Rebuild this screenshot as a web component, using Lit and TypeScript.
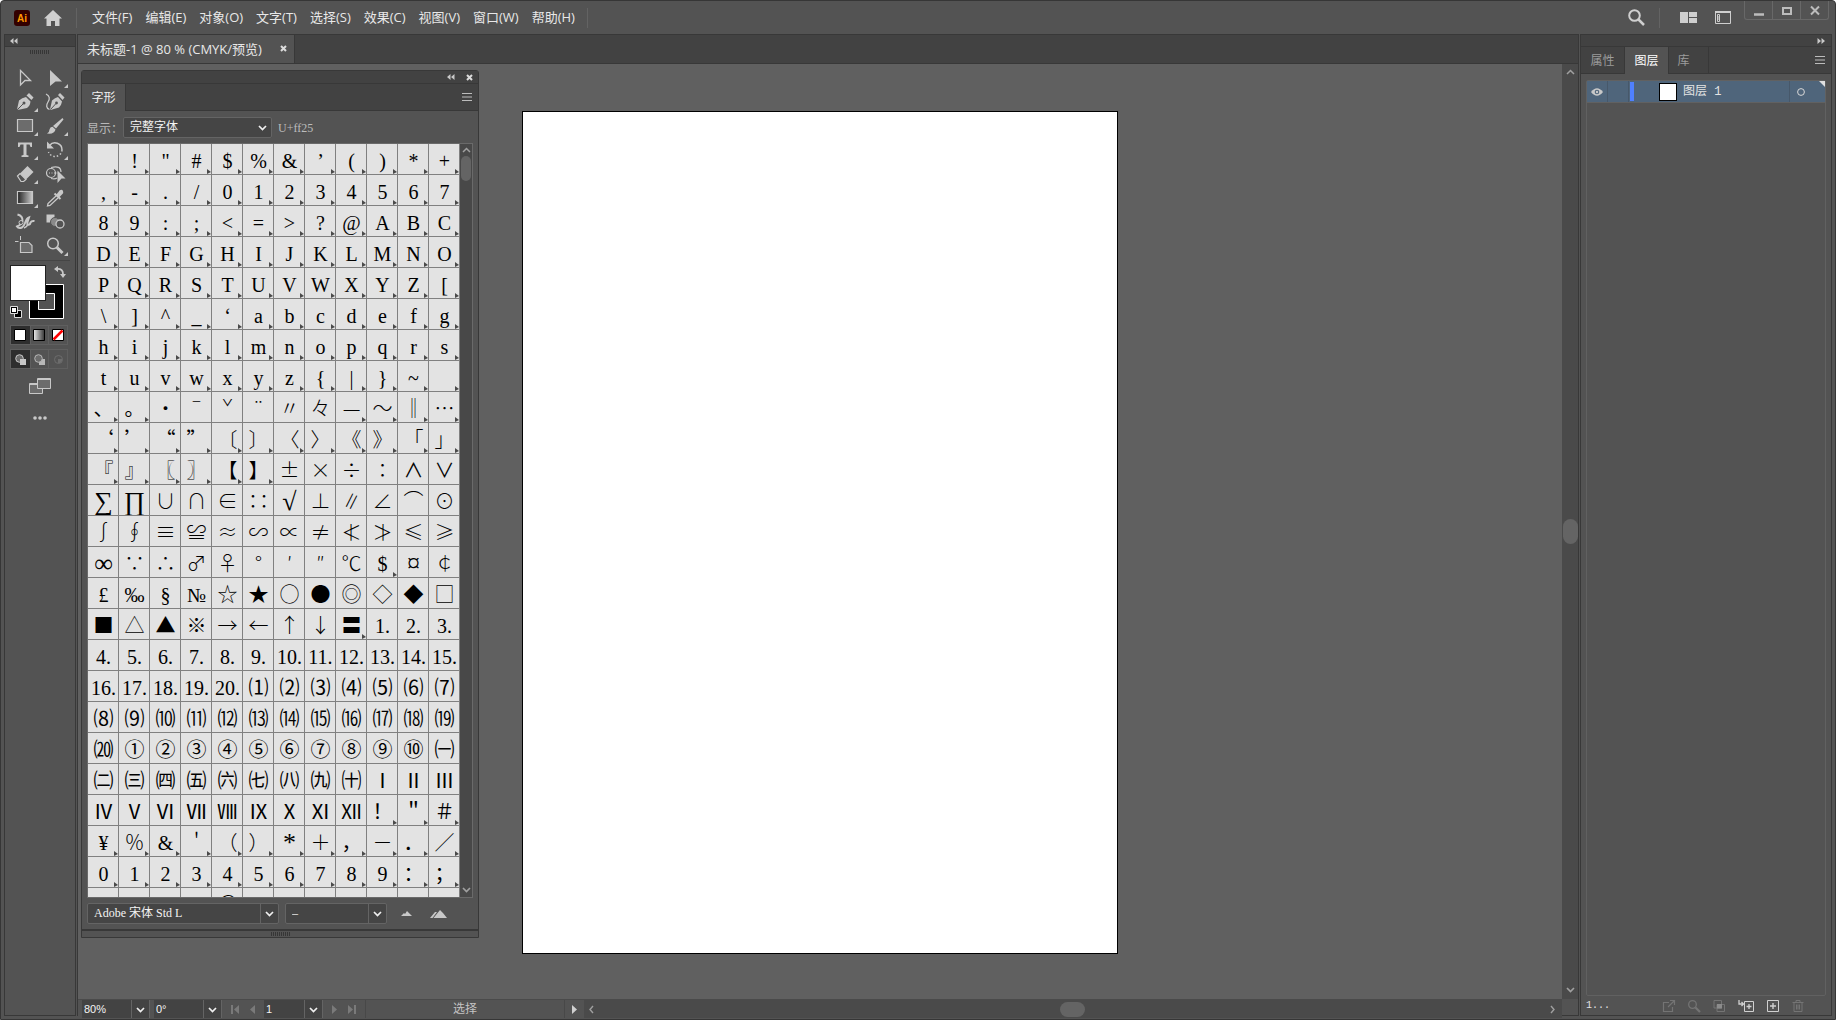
import { LitElement, html, css, svg, nothing } from "lit";
import { customElement, property } from "lit/decorators.js";
import { classMap } from "lit/directives/class-map.js";

const base = css`
  * {
    box-sizing: border-box;
  }
  button {
    appearance: none;
    border: 0;
    margin: 0;
    padding: 0;
    background: none;
    color: inherit;
    font: inherit;
    display: flex;
    align-items: center;
    justify-content: center;
  }
  svg {
    display: block;
    flex: none;
    overflow: visible;
  }
`;

const icon = (w: number, h: number, body: unknown) => html`<svg
  width=${w}
  height=${h}
  viewBox="0 0 ${w} ${h}"
  aria-hidden="true"
>
  ${body}
</svg>`;

const chevronDown = (color = "#f0f0f0") =>
  icon(9, 6, svg`<path d="M1 1l3.500 3.500L8 1" fill="none" stroke=${color} stroke-width="1.700"/>`);
const chevronUp = (color = "#a0a0a0") =>
  icon(9, 6, svg`<path d="M1 5l3.500-3.500L8 5" fill="none" stroke=${color} stroke-width="1.500"/>`);
const chevronLeft = icon(5, 9, svg`<path d="M4 1L1 4.500L4 8" fill="none" stroke="#a0a0a0" stroke-width="1.400"/>`);
const chevronRight = icon(5, 9, svg`<path d="M1 1l3 3.500L1 8" fill="none" stroke="#a0a0a0" stroke-width="1.400"/>`);
const doubleLeft = icon(8, 6, svg`<path d="M3.500 0v6L0 3zM7.500 0v6L4 3z" fill="#c8c8c8"/>`);
const doubleRight = icon(8, 6, svg`<path d="M.5 0v6L4 3zM4.500 0v6L8 3z" fill="#c8c8c8"/>`);
const closeMark = icon(7, 7, svg`<path d="M1 1l5 5M6 1L1 6" stroke="#dcdcdc" stroke-width="2"/>`);
const hamburger = icon(10, 8, svg`<path d="M0 .5h10M0 4h10M0 7.500h10" stroke="#bcbcbc"/>`);
const grip = icon(
  19,
  4,
  svg`<path d="M.5 0v4M2.500 0v4M4.500 0v4M6.500 0v4M8.500 0v4M10.500 0v4M12.500 0v4M14.500 0v4M16.500 0v4M18.500 0v4" stroke="#363636"/>`
);
const C = "#c8c8c8";

interface Tool {
  name: string;
  more: boolean;
  art: unknown;
}

const tools: Tool[] = [
  { name: "直接选择", more: false, art: svg`<path d="M5.500 2.500L15.500 12.500H10L5.500 17z" fill="none" stroke=${C} stroke-width="1.300"/>` },
  { name: "选择", more: true, art: svg`<path d="M5 2L17 13.500H10.500L5 18z" fill=${C}/>` },
  {
    name: "钢笔",
    more: true,
    art: svg`<path d="M2 17.500L4 8.500Q7 5.500 11 5L15.500 9.500Q15 14 12 16L2.500 18L8 12z" fill=${C}/><path d="M2.500 17.500L8.500 11.500" stroke="#535353"/><circle cx="9" cy="11" r="1.500" fill="#535353"/><path d="M11.500 3.500L14 1L18.500 5.500L16.500 8z" fill=${C}/>`,
  },
  {
    name: "曲率",
    more: false,
    art: svg`<path d="M5 17.500L7 8.500Q10 5.500 13 5L17 9.500Q16.500 13 14 15.500L5.500 18z" fill=${C}/><path d="M5.500 17.500L11 11.500" stroke="#535353"/><circle cx="11.500" cy="11" r="1.400" fill="#535353"/><path d="M13 3L15 1L19.500 5.500L17.500 8z" fill=${C}/><path d="M1 2C5 4 5 7 3 10S1 16 4.500 17.500" fill="none" stroke=${C} stroke-width="1.300"/>`,
  },
  { name: "矩形", more: true, art: svg`<path d="M2.500 3.500h15v12h-15z" fill="#6c6c6c" stroke=${C} stroke-width="1.200"/>` },
  {
    name: "画笔",
    more: true,
    art: svg`<path d="M17.500 2L18.500 3.500L11 12.500L8 10z" fill=${C}/><path d="M7.500 10.800L10.500 13.500Q9.500 18.500 2 17.500Q4.500 16 4.500 13.500Q5 11 7.500 10.800z" fill=${C}/>`,
  },
  { name: "文字", more: true, art: svg`<path d="M3 2.500H17V7H15.500L14.500 4.500H11.500V15L13.500 15.500V17H6.500V15.500L8.500 15V4.500H5.500L4.500 7H3z" fill=${C}/>` },
  {
    name: "旋转",
    more: true,
    art: svg`<path d="M4.500 5.500A7 7 0 0 1 17 10" fill="none" stroke=${C} stroke-width="1.500"/><path d="M2 1.500V8.500H9z" fill=${C}/><path d="M17 10A7 7 0 0 1 3.500 12" fill="none" stroke=${C} stroke-width="1.500" stroke-dasharray="1.500 2"/>`,
  },
  {
    name: "橡皮擦",
    more: true,
    art: svg`<path d="M2.500 12L12.500 2L18.500 8L9 17.500z" fill=${C}/><path d="M2.500 12L5 9.500L11 15.500L8.500 17.500H6z" fill="#535353" stroke=${C} stroke-width="1.200"/>`,
  },
  {
    name: "形状生成器",
    more: false,
    art: svg`<circle cx="6" cy="9" r="4.500" fill="none" stroke=${C} stroke-width="1.200"/><path d="M6 3.500Q16 1 16 8M6 14.500Q10 15.500 12 14" fill="none" stroke=${C} stroke-width="1.200"/><path d="M4 9h9" stroke=${C} stroke-dasharray="1 1.500"/><path d="M12.500 6.500L20.500 14.500H16.500L12.500 19z" fill=${C}/>`,
  },
  {
    name: "渐变",
    more: true,
    art: svg`<defs><linearGradient id="toolGrad"><stop offset="0" stop-color="#222"/><stop offset="1" stop-color="#ccc"/></linearGradient></defs><path d="M2.500 3.500h15v12h-15z" fill="url(#toolGrad)" stroke=${C} stroke-width="1.200"/>`,
  },
  {
    name: "吸管",
    more: false,
    art: svg`<path d="M11.500 6.500L14.500 2.500Q17 1 18 3Q19 5 17 6.500L14 9.500z" fill=${C}/><path d="M9.500 5.500L15.500 11" stroke=${C} stroke-width="2"/><path d="M11 8L3 15.500L2.500 18L5 17.500L13 10" fill="none" stroke=${C} stroke-width="1.300"/>`,
  },
  {
    name: "操控变形",
    more: false,
    art: svg`<path d="M2.500 2.500Q8 4 7.500 9Q6.500 12.500 2 14.500Q3.500 17 7 15.500Q9 14 10 11Q11.500 6.500 14 5.500L13 8.500Q12 11 12.500 12.500Q15 13.500 15.500 10.500Q16.500 8.500 19.500 9" fill="none" stroke=${C} stroke-width="2"/><path d="M9 16Q12 15 13 12" fill="none" stroke=${C} stroke-width="1.500"/><circle cx="6" cy="10.500" r="2" fill="#535353" stroke=${C}/>`,
  },
  {
    name: "混合",
    more: false,
    art: svg`<path d="M1.500 2.500h8v8h-8z" fill=${C}/><circle cx="10" cy="10" r="4.500" fill="#8a8a8a" stroke="#535353" /><circle cx="15" cy="12" r="4" fill="#535353" stroke=${C} stroke-width="1.300"/>`,
  },
  {
    name: "画板",
    more: false,
    art: svg`<path d="M5.500 6.500h8.500l3 3v7H5.500z" fill="#6c6c6c" stroke=${C} stroke-width="1.200"/><path d="M5.500 0v4M0 5.500h3.500" stroke=${C}/>`,
  },
  {
    name: "缩放",
    more: true,
    art: svg`<circle cx="8" cy="7.500" r="5.300" fill="none" stroke=${C} stroke-width="1.500"/><path d="M12 11.500l5.500 5.500" stroke=${C} stroke-width="3"/>`,
  },
];

@customElement("tool-strip")
export class ToolStrip extends LitElement {
  static styles = [
    base,
    css`
      :host {
        display: flex;
        flex-direction: column;
        border: 1px solid #383838;
        background: #535353;
      }
      .head {
        height: 12px;
        padding-left: 5px;
        background: #424242;
        border-bottom: 1px solid #383838;
        display: flex;
        align-items: center;
      }
      .grip {
        height: 19px;
        padding: 3px 0 0 25px;
      }
      .tools {
        display: grid;
        grid-template-columns: 30px 30px;
        grid-auto-rows: 24px;
        padding-left: 5px;
      }
      .rule {
        height: 1px;
        margin: 2px 5px 4px;
        background: #454545;
      }
      .colors {
        position: relative;
        height: 60px;
      }
      .fill,
      .stroke,
      .swap,
      .default {
        position: absolute;
      }
      .fill {
        left: 5px;
        top: 0;
        width: 36px;
        height: 36px;
        background: #fff;
        border: 1px solid #222;
      }
      .stroke {
        left: 24px;
        top: 19px;
      }
      .swap {
        left: 49px;
        top: 1px;
      }
      .default {
        left: 5px;
        top: 41px;
      }
      .trio {
        display: grid;
        grid-template-columns: repeat(3, 1fr);
        width: 58px;
        height: 20px;
        margin: 0 0 4px 5px;
        border: 1px solid #5f5f5f;
      }
      .trio button + button {
        border-left: 1px solid #5f5f5f;
      }
      .trio .on {
        background: #2e2e2e;
      }
      .screen,
      .dots {
        align-self: flex-start;
      }
      .screen {
        margin: 5px 0 0 24px;
      }
      .dots {
        margin: 22px 0 0 28px;
      }
    `,
  ];

  render() {
    return html`
      <div class="head"><button aria-label="折叠">${doubleLeft}</button></div>
      <div class="grip">${grip}</div>
      <div class="tools">
        ${tools.map(
          (t) => html`<button aria-label=${t.name}>
            ${icon(20, 20, svg`${t.art}${t.more ? svg`<path d="M23 16v4h-4z" fill=${C}/>` : nothing}`)}
          </button>`
        )}
      </div>
      <div class="rule"></div>
      <div class="colors">
        <button class="stroke" aria-label="描边">
          ${icon(
            35,
            35,
            svg`<path d="M.5 .5h34v34H.5z" fill="#000" stroke="#fff"/><path d="M9.500 9.500h16v16h-16z" fill="#535353" stroke="#fff"/>`
          )}
        </button>
        <button class="fill" aria-label="填色"></button>
        <button class="swap" aria-label="互换填色和描边">
          ${icon(12, 12, svg`<path d="M3 3Q9 2.500 9 8" fill="none" stroke=${C} stroke-width="1.800"/><path d="M4 0v6L0 3zM6 8h6l-3 4z" fill=${C}/>`)}
        </button>
        <button class="default" aria-label="默认填色和描边">
          ${icon(
            12,
            12,
            svg`<path d="M4.500 4.500h7v7h-7z" fill="#000" stroke="#ddd"/><path d="M.5 .5h7v7h-7z" fill="#000" stroke="#ddd"/><path d="M2 2h4v4H2z" fill="#fff"/>`
          )}
        </button>
      </div>
      <div class="trio">
        <button class="on" aria-label="颜色">${icon(12, 12, svg`<path d="M.5 .5h11v11H.5z" fill="#fff" stroke="#000"/>`)}</button>
        <button aria-label="渐变填充">
          ${icon(
            12,
            12,
            svg`<defs><linearGradient id="g"><stop offset="0" stop-color="#eee"/><stop offset="1" stop-color="#333"/></linearGradient></defs><path d="M.5 .5h11v11H.5z" fill="url(#g)" stroke="#000"/>`
          )}
        </button>
        <button aria-label="无">
          ${icon(12, 12, svg`<path d="M.5 .5h11v11H.5z" fill="#fff" stroke="#000"/><path d="M1.500 10.500l9-9" stroke="#f00" stroke-width="2.500"/>`)}
        </button>
      </div>
      <div class="trio">
        <button class="on" aria-label="正常绘图">${this.mode("#c8c8c8", 0)}</button>
        <button aria-label="背面绘图">${this.mode("#b8b8b8", 1)}</button>
        <button aria-label="内部绘图">${this.mode("#6c6c6c", 2)}</button>
      </div>
      <button class="screen" aria-label="更改屏幕模式">
        ${icon(22, 16, svg`<path d="M.5 5.500h13v10H.5z" fill="#6c6c6c" stroke=${C}/><path d="M8.500 .5h13v10h-13z" fill="#6c6c6c" stroke=${C}/><path d="M8 1.500h14M1 6.500h7" stroke=${C}/>`)}
      </button>
      <button class="dots" aria-label="编辑工具栏">
        ${icon(14, 4, svg`<circle cx="2" cy="2" r="1.800" fill=${C}/><circle cx="7" cy="2" r="1.800" fill=${C}/><circle cx="12" cy="2" r="1.800" fill=${C}/>`)}
      </button>
    `;
  }

  private mode(color: string, kind: number) {
    const circle = svg`<circle cx="4.500" cy="4.500" r="3.800" fill="#6c6c6c" stroke=${color}/>`;
    const square = svg`<path d="M5 5h6v6H5z" fill=${color}/>`;
    return icon(
      11,
      11,
      kind === 0
        ? svg`${circle}${square}`
        : kind === 1
          ? svg`${square}${circle}`
          : svg`<circle cx="5.500" cy="5.500" r="4" fill="none" stroke=${color}/><path d="M5 5h4v2L7 9H5z" fill=${color}/>`
    );
  }
}

interface Row {
  glyphs: string[];
  face: "latin" | "cjk";
  alternates: (col: number) => boolean;
}

const all = () => true;
const none = () => false;
const row = (text: string | string[], face: Row["face"], alternates: Row["alternates"] = none): Row => ({
  glyphs: Array.isArray(text) ? text : [...text],
  face,
  alternates,
});

const rows: Row[] = [
  row(" !\"#$%&’()*+", "latin", all),
  row(",-./01234567", "latin", all),
  row("89:;<=>?@ABC", "latin", all),
  row("DEFGHIJKLMNO", "latin", all),
  row("PQRSTUVWXYZ[", "latin", all),
  row("\\]^_‘abcdefg", "latin", all),
  row("hijklmnopqrs", "latin", all),
  row("tuvwxyz{|}~ ", "latin", all),
  row("、。·ˉˇ¨〃々—～‖…", "cjk", (c) => c < 2 || c > 7),
  row("‘’“”〔〕〈〉《》「」", "cjk", all),
  row("『』〖〗【】±×÷∶∧∨", "cjk", (c) => c < 6),
  row("∑∏∪∩∈∷√⊥∥∠⌒⊙", "cjk"),
  row("∫∮≡≌≈∽∝≠≮≯≤≥", "cjk"),
  row("∞∵∴♂♀°′″℃$¤￠", "cjk", (c) => c === 9),
  row("£‰§№☆★○●◎◇◆□", "cjk"),
  row([..."■△▲※→←↑↓〓", "1.", "2.", "3."], "cjk", (c) => c === 8),
  row(["4.", "5.", "6.", "7.", "8.", "9.", "10.", "11.", "12.", "13.", "14.", "15."], "cjk"),
  row(["16.", "17.", "18.", "19.", "20.", ..."⑴⑵⑶⑷⑸⑹⑺"], "cjk"),
  row("⑻⑼⑽⑾⑿⒀⒁⒂⒃⒄⒅⒆", "cjk"),
  row("⒇①②③④⑤⑥⑦⑧⑨⑩㈠", "cjk"),
  row("㈡㈢㈣㈤㈥㈦㈧㈨㈩ⅠⅡⅢ", "cjk"),
  row("ⅣⅤⅥⅦⅧⅨⅩⅪⅫ！＂＃", "cjk", (c) => c > 8),
  row("¥％&＇（）*＋，－．／", "cjk", all),
  row("0123456789：；", "cjk", all),
  row("    ＠       ", "cjk"),
];

@customElement("glyph-panel")
export class GlyphPanel extends LitElement {
  static styles = [
    base,
    css`
      :host {
        display: flex;
        flex-direction: column;
        border: 1px solid #383838;
        border-radius: 3px 3px 0 0;
        background: #535353;
        font: 12px/16px "Liberation Serif", "Noto Sans CJK SC", serif;
        color: #d0d0d0;
      }
      .head {
        height: 13px;
        display: flex;
        align-items: center;
        justify-content: flex-end;
        gap: 11px;
        padding-right: 5px;
        background: #424242;
        border-bottom: 1px solid #383838;
      }
      .tabs {
        height: 27px;
        display: flex;
        justify-content: space-between;
        background: #424242;
        border-bottom: 1px solid #383838;
      }
      .tab {
        width: 44px;
        margin-bottom: -1px;
        padding-bottom: 2px;
        border-right: 1px solid #383838;
        background: #535353;
        color: #f0f0f0;
        font-family: "Noto Sans CJK SC", sans-serif;
      }
      .menu {
        padding-right: 6px;
      }
      .body {
        display: flex;
        flex-direction: column;
        gap: 5px;
        padding: 6px 5px 5px;
      }
      .show {
        display: flex;
        align-items: center;
        gap: 6px;
        height: 21px;
      }
      .show label {
        width: 30px;
        white-space: nowrap;
        font-family: "Noto Sans CJK SC", sans-serif;
        color: #b8b8b8;
      }
      .pick {
        display: grid;
        align-items: center;
        height: 21px;
        border: 1px solid #646464;
        border-radius: 2px;
        background: #454545;
      }
      .pick select,
      .pick .arrow {
        grid-area: 1 / 1;
      }
      .pick select {
        appearance: none;
        width: 100%;
        height: 19px;
        padding: 0 20px 0 6px;
        border: 0;
        background: none;
        color: #f4f4f4;
        font: 12px/17px "Liberation Serif", "Noto Sans CJK SC", serif;
      }
      .arrow {
        justify-self: end;
        display: flex;
        align-items: center;
        padding: 0 4px;
        height: 19px;
        pointer-events: none;
      }
      .split .arrow {
        border-left: 1px solid #646464;
      }
      .wide {
        width: 149px;
      }
      .family {
        width: 192px;
      }
      .style {
        width: 102px;
      }
      .code {
        color: #bcbcbc;
      }
      .sheet {
        display: grid;
        grid-template-columns: 1fr 12px;
        height: 755px;
        border: 1px solid #6a6a6a;
        background: #484848;
      }
      .glyphs {
        display: grid;
        grid-template-columns: repeat(12, 31px);
        grid-auto-rows: 31px;
        overflow: hidden;
        background: #e3e3e3;
        color: #000;
      }
      .cell {
        position: relative;
        overflow: hidden;
        border-right: 1px solid #808080;
        border-bottom: 1px solid #808080;
        padding: 4px 0 0 1px;
        font: 20px/26px "Liberation Serif", "Noto Sans CJK SC", serif;
        white-space: pre;
      }
      .cjk {
        padding-top: 1px;
        font: 300 20px/28px "Noto Sans CJK SC", serif;
      }
      .cjk.dark {
        font-weight: 400;
      }
      .serif {
        font: 20px/26px "Liberation Serif", serif;
      }
      .big {
        padding-top: 3px;
        font: 26px/26px "Liberation Serif", serif;
      }
      .cell.alt::after {
        content: "";
        position: absolute;
        right: 0;
        bottom: 0;
        border-left: 4px solid #4a4a4a;
        border-top: 3px solid transparent;
        border-bottom: 2px solid transparent;
      }
      .rail {
        display: flex;
        flex-direction: column;
        align-items: center;
        padding: 3px 0 4px;
      }
      .thumb {
        width: 10px;
        height: 25px;
        margin: 3px 0 auto;
        border-radius: 5px;
        background: #646464;
      }
      .foot {
        display: flex;
        align-items: center;
        gap: 6px;
      }
      .foot .small {
        margin-left: 8px;
      }
      .foot .large {
        margin-left: 12px;
      }
      .base {
        height: 8px;
        display: flex;
        justify-content: center;
        padding-top: 1px;
        border-top: 2px solid #383838;
      }
    `,
  ];

  private face(glyph: string, face: string) {
    if (face === "latin") return {};
    const serif = /^(\d+\.?|[$£§№‰¥&])$/.test(glyph);
    const big = /^[∑∏∞¤*√]$/.test(glyph);
    const dark = /^[⑴-⒇①-⑩㈠-㈩Ⅰ-Ⅻ‘’“”、。！＂＃，．：；∧∨]$/.test(glyph);
    return { cjk: !serif && !big, serif, big, dark };
  }

  render() {
    return html`
      <div class="head">
        <button aria-label="折叠为图标">${doubleLeft}</button>
        <button aria-label="关闭面板">${closeMark}</button>
      </div>
      <div class="tabs">
        <button class="tab">字形</button>
        <button class="menu" aria-label="面板菜单">${hamburger}</button>
      </div>
      <div class="body">
        <div class="show">
          <label for="show">显示：</label>
          <div class="pick wide">
            <select id="show">
              <option>完整字体</option>
            </select>
            <span class="arrow">${chevronDown()}</span>
          </div>
          <span class="code">U+ff25</span>
        </div>
        <div class="sheet">
          <div class="glyphs">
            ${rows.map((r) =>
              r.glyphs.map(
                (g, c) => html`<button
                  class=${classMap({ cell: true, alt: r.alternates(c), ...this.face(g, r.face) })}
                  aria-label=${g === " " ? "空格" : nothing}
                >${g}</button>`
              )
            )}
          </div>
          <div class="rail">
            <button aria-label="向上滚动">${chevronUp()}</button>
            <div class="thumb"></div>
            <button aria-label="向下滚动">${chevronDown("#a0a0a0")}</button>
          </div>
        </div>
        <div class="foot">
          <div class="pick split family">
            <select aria-label="字体系列">
              <option>Adobe 宋体 Std L</option>
            </select>
            <span class="arrow">${chevronDown()}</span>
          </div>
          <div class="pick split style">
            <select aria-label="字体样式">
              <option>–</option>
            </select>
            <span class="arrow">${chevronDown()}</span>
          </div>
          <button class="small" aria-label="缩小">${icon(11, 5, svg`<path d="M0 5l3-3 1 1 2-3 3 3 2 2z" fill=${C}/>`)}</button>
          <button class="large" aria-label="放大">${icon(17, 8, svg`<path d="M0 8l5-6h2L2.500 8zM3.500 8L10 0l3 3 4 5z" fill=${C}/>`)}</button>
        </div>
      </div>
      <div class="base">${grip}</div>
    `;
  }
}

@customElement("layers-panel")
export class LayersPanel extends LitElement {
  static styles = [
    base,
    css`
      :host {
        display: flex;
        flex-direction: column;
        border: 1px solid #383838;
        background: #535353;
        color: #e4e4e4;
        font: 12px/16px "Noto Sans CJK SC", sans-serif;
      }
      .head {
        height: 12px;
        display: flex;
        align-items: center;
        justify-content: flex-end;
        padding-right: 6px;
        background: #424242;
        border-bottom: 1px solid #383838;
      }
      .tabs {
        height: 27px;
        display: flex;
        background: #424242;
        border-bottom: 1px solid #383838;
      }
      .tab {
        width: 44px;
        padding-bottom: 1px;
        border-right: 1px solid #383838;
        color: #9c9c9c;
      }
      .tab.on {
        margin-bottom: -1px;
        padding-bottom: 2px;
        background: #535353;
        color: #fff;
      }
      .tab.lib {
        width: 40px;
        padding-right: 10px;
      }
      .menu {
        margin-left: auto;
        padding-right: 6px;
      }
      .list {
        flex: 1;
        margin: 6px 5px 0;
        border: 1px solid #616161;
        border-radius: 2px;
      }
      .layer {
        display: flex;
        align-items: stretch;
        height: 22px;
        background: #4f657b;
        border-bottom: 1px solid #616161;
      }
      .layer button {
        width: 21px;
        border-right: 1px solid #47586a;
      }
      .lock {
        width: 22px;
      }
      .tint {
        width: 4px;
        margin: 1px 1px;
        background: #4f80ff;
      }
      .thumb {
        width: 18px;
        height: 18px;
        margin: 1px 6px 0 24px;
        align-self: center;
        background: #fff;
        border: 1px solid #000;
      }
      .name {
        flex: 1;
        padding-top: 3px;
        font-family: "Liberation Mono", "Noto Sans CJK SC", monospace;
        border-right: 1px solid #47586a;
      }
      .layer .target {
        width: 21px;
        border-right: 0;
      }
      .corner {
        width: 14px;
        display: flex;
        justify-content: flex-end;
      }
      .foot {
        height: 19px;
        display: flex;
        align-items: center;
        padding: 0 27px 0 5px;
        font-family: "Liberation Mono", monospace;
        font-size: 10px;
      }
      .foot .count {
        margin-right: auto;
      }
      .foot .actions {
        display: flex;
        gap: 13px;
      }
    `,
  ];

  render() {
    const dim = "#747474";
    return html`
      <div class="head"><button aria-label="折叠为图标">${doubleRight}</button></div>
      <div class="tabs">
        <button class="tab">属性</button>
        <button class="tab on">图层</button>
        <button class="tab lib">库</button>
        <button class="menu" aria-label="面板菜单">${hamburger}</button>
      </div>
      <div class="list">
        <div class="layer">
          <button aria-label="切换可视性">
            ${icon(12, 8, svg`<path d="M0 4Q6-3.500 12 4Q6 11.500 0 4z" fill=${C}/><circle cx="6" cy="4" r="2.300" fill="#4f657b"/><circle cx="6" cy="4" r="1.200" fill=${C}/>`)}
          </button>
          <button class="lock" aria-label="切换锁定"></button>
          <span class="tint"></span>
          <span class="thumb"></span>
          <span class="name">图层 1</span>
          <button class="target" aria-label="定位图层">${icon(8, 8, svg`<circle cx="4" cy="4" r="3.400" fill="none" stroke="#d8d8d8"/>`)}</button>
          <span class="corner">${icon(6, 6, svg`<path d="M0 0h6v6z" fill="#e0e0e0"/>`)}</span>
        </div>
      </div>
      <div class="foot">
        <span class="count">1...</span>
        <span class="actions">
          <button aria-label="收集以导出">${icon(12, 12, svg`<path d="M6 2.500H.5v9h9V7M7 .5h4.500V5M11.500 .5L5 7" fill="none" stroke=${dim} stroke-width="1.200"/>`)}</button>
          <button aria-label="定位对象">${icon(12, 12, svg`<circle cx="4.500" cy="4.500" r="3.800" fill="none" stroke=${dim} stroke-width="1.300"/><path d="M7.500 7.500L12 12" stroke=${dim} stroke-width="2.200"/>`)}</button>
          <button aria-label="建立剪切蒙版">${icon(12, 12, svg`<path d="M1 .500h7.500V8H1zM4 4.500h7.500v7H4z" fill="none" stroke=${dim}/><path d="M4 4h5v4.500H4z" fill="#8c8c8c"/>`)}</button>
          <button aria-label="创建新子图层">${icon(16, 12, svg`<path d="M6.500 1.500h9v10h-9z" fill="none" stroke="#d0d0d0"/><path d="M8.500 6.500h5M11 4v5M1 0v4h4M3.500 2l2 2-2 2" fill="none" stroke="#d0d0d0" stroke-width="1.300"/>`)}</button>
          <button aria-label="创建新图层">${icon(12, 12, svg`<path d="M.5 .5h11v11H.5z" fill="none" stroke="#d0d0d0"/><path d="M3 6h6M6 3v6" stroke="#d0d0d0" stroke-width="1.400"/>`)}</button>
          <button aria-label="删除所选图层">${icon(12, 12, svg`<path d="M.500 2.500h11M4 2V.5h4V2M2 3v8.500h8V3M4.500 4.500v5M6 4.500v5M7.500 4.500v5" fill="none" stroke=${dim}/>`)}</button>
        </span>
      </div>
    `;
  }
}

@customElement("status-bar")
export class StatusBar extends LitElement {
  static styles = [
    base,
    css`
      :host {
        display: flex;
        align-items: stretch;
        padding-left: 4px;
        background: #535353;
        border-top: 1px solid #4a4a4a;
        color: #f4f4f4;
        font: 12px/15px "Liberation Sans", "Noto Sans CJK SC", sans-serif;
      }
      .field {
        display: flex;
        background: #434343;
        border-right: 1px solid #646464;
      }
      .field input {
        appearance: none;
        width: 50px;
        border: 0;
        border-right: 1px solid #646464;
        border-radius: 0;
        margin: 0;
        padding: 0 0 0 2px;
        background: none;
        color: inherit;
        font: inherit;
        font-size: 11px;
      }
      .field input.short {
        width: 41px;
      }
      .field button {
        width: 17px;
        padding-top: 2px;
      }
      .nav {
        display: flex;
        align-items: center;
        justify-content: center;
        gap: 10px;
        width: 42px;
      }
      .gap {
        width: 4px;
      }
      .mode {
        width: 200px;
        border-left: 1px solid #484848;
        border-right: 1px solid #484848;
        text-align: center;
        color: #c4c4c4;
        line-height: 18px;
      }
      .play {
        width: 19px;
      }
      .rail {
        flex: 1;
        display: flex;
        align-items: center;
        justify-content: space-between;
        padding: 0 7px 0 5px;
        background: #4a4a4a;
      }
      .thumb {
        width: 25px;
        height: 15px;
        border-radius: 8px;
        background: #646464;
      }
    `,
  ];

  render() {
    const dim = "#7a7a7a";
    return html`
      <div class="field">
        <input aria-label="缩放比例" value="80%" /><button aria-label="缩放列表">${chevronDown()}</button>
      </div>
      <div class="gap"></div>
      <div class="field">
        <input aria-label="旋转角度" value="0°" /><button aria-label="角度列表">${chevronDown()}</button>
      </div>
      <div class="nav">
        <button aria-label="首个画板">${icon(9, 9, svg`<path d="M1 0v9" stroke=${dim} stroke-width="2"/><path d="M8 0v9L3 4.500z" fill=${dim}/>`)}</button>
        <button aria-label="上一个画板">${icon(5, 9, svg`<path d="M5 0v9L0 4.500z" fill=${dim}/>`)}</button>
      </div>
      <div class="field">
        <input class="short" aria-label="画板" value="1" /><button aria-label="画板列表">${chevronDown()}</button>
      </div>
      <div class="nav">
        <button aria-label="下一个画板">${icon(5, 9, svg`<path d="M0 0v9l5-4.500z" fill=${dim}/>`)}</button>
        <button aria-label="最后一个画板">${icon(9, 9, svg`<path d="M8 0v9" stroke=${dim} stroke-width="2"/><path d="M1 0v9l5-4.500z" fill=${dim}/>`)}</button>
      </div>
      <div class="mode">选择</div>
      <button class="play" aria-label="状态栏菜单">${icon(5, 9, svg`<path d="M0 0v9l5-4.500z" fill="#d0d0d0"/>`)}</button>
      <div class="rail">
        <button aria-label="向左滚动">${chevronLeft}</button>
        <div class="thumb"></div>
        <button aria-label="向右滚动">${chevronRight}</button>
      </div>
    `;
  }
}

@customElement("app-root")
export class AppRoot extends LitElement {
  @property({ attribute: false }) menus = [
    "文件(F)",
    "编辑(E)",
    "对象(O)",
    "文字(T)",
    "选择(S)",
    "效果(C)",
    "视图(V)",
    "窗口(W)",
    "帮助(H)",
  ];

  static styles = [
    base,
    css`
      :host {
        display: flex;
        flex-direction: column;
        height: 100vh;
        box-sizing: border-box;
        border: 1px solid #363636;
        border-radius: 4px 4px 0 0;
        background: #535353;
        color: #e8e8e8;
        font: 13px/16px "Open Sans", "Noto Sans CJK SC", sans-serif;
        overflow: hidden;
      }
      .bar {
        display: flex;
        align-items: center;
        height: 33px;
        padding-left: 13px;
      }
      .logo {
        margin-right: 14px;
      }
      .divider {
        width: 1px;
        height: 20px;
        background: #636363;
      }
      .home {
        margin-right: 14px;
      }
      nav {
        display: flex;
        gap: 13px;
        padding: 0 12px 2px 15px;
        white-space: nowrap;
      }
      .right {
        margin-left: auto;
        align-self: stretch;
        display: flex;
        align-items: center;
      }
      .right .divider {
        margin: 0 20px 0 14px;
      }
      .right .panels {
        margin-right: 18px;
      }
      .window {
        display: flex;
        align-self: flex-start;
        height: 19px;
        margin: 0 6px 0 13px;
        border: 1px solid #686868;
        border-top: 0;
        border-radius: 0 0 3px 3px;
      }
      .window button {
        width: 27px;
        padding-top: 1px;
      }
      .window button + button {
        width: 28px;
        border-left: 1px solid #686868;
      }
      main {
        flex: 1;
        min-height: 0;
        display: grid;
        grid-template-columns: 72px 1fr 252px;
        gap: 1px;
        margin: 0 3px 3px;
      }
      .doc {
        display: flex;
        flex-direction: column;
        min-width: 0;
        border: 1px solid #383838;
      }
      .doc-tabs {
        height: 29px;
        display: flex;
        background: #424242;
        border-bottom: 1px solid #383838;
      }
      .doc-tab {
        display: flex;
        align-items: center;
        justify-content: space-between;
        width: 217px;
        padding: 0 7px 1px 9px;
        border-right: 1px solid #383838;
        background: #535353;
        white-space: nowrap;
      }
      .stage {
        flex: 1;
        min-height: 0;
        display: grid;
        grid-template-columns: 1fr 16px;
      }
      .canvas {
        position: relative;
        overflow: hidden;
        background: #606060;
      }
      .artboard {
        position: absolute;
        left: 444px;
        top: 47px;
        width: 596px;
        height: 843px;
        background: #fff;
        border: 1px solid #000;
      }
      glyph-panel {
        position: absolute;
        left: 3px;
        top: 6px;
        width: 398px;
      }
      .rail {
        display: flex;
        flex-direction: column;
        align-items: center;
        justify-content: space-between;
        padding: 5px 0 6px;
        background: #4a4a4a;
      }
      .thumb {
        width: 15px;
        height: 25px;
        border-radius: 8px;
        background: #646464;
      }
      .bottom {
        display: grid;
        grid-template-columns: 1fr 16px;
        height: 16px;
      }
    `,
  ];

  render() {
    return html`
      <header class="bar">
        <svg class="logo" width="16" height="16" viewBox="0 0 16 16" role="img" aria-label="Ai">
          <rect width="16" height="16" rx="3" fill="#330000" />
          <text x="8" y="12" text-anchor="middle" font-family="Liberation Sans" font-weight="700" font-size="10" fill="#ff9a00">Ai</text>
        </svg>
        <button class="home" aria-label="主页">
          ${icon(18, 16, svg`<path d="M9 0L18 8.500H15.500V16H11V11H7V16H2.500V8.500H0z" fill="#cfcfcf"/>`)}
        </button>
        <span class="divider"></span>
        <nav>${this.menus.map((m) => html`<button>${m}</button>`)}</nav>
        <span class="divider"></span>
        <div class="right">
          <button aria-label="搜索">
            ${icon(17, 17, svg`<circle cx="6.500" cy="6.500" r="5.300" fill="none" stroke="#cfcfcf" stroke-width="2"/><path d="M10.500 10.500l5.500 5.500" stroke="#cfcfcf" stroke-width="2.500"/>`)}
          </button>
          <span class="divider"></span>
          <button class="panels" aria-label="排列文档">
            ${icon(17, 11, svg`<path d="M0 0h8v11H0zM9 0h8v5H9zM9 6h8v5H9z" fill="#cfcfcf"/>`)}
          </button>
          <button aria-label="切换工作区">
            ${icon(16, 13, svg`<path d="M.5 .5h15v12H.5z" fill="none" stroke="#cfcfcf"/><path d="M0 1h16" stroke="#cfcfcf" stroke-width="2"/><path d="M2.500 3.500h2v7h-2zM2.500 6h2M2.500 8h2" fill="none" stroke="#cfcfcf"/>`)}
          </button>
          <div class="window">
            <button aria-label="最小化">${icon(10, 10, svg`<path d="M0 8.500h10" stroke="#bcbcbc" stroke-width="2.500"/>`)}</button>
            <button aria-label="最大化">${icon(10, 8, svg`<path d="M1 1h8v6H1z" fill="none" stroke="#bcbcbc" stroke-width="2"/>`)}</button>
            <button aria-label="关闭">${icon(10, 9, svg`<path d="M1 .5l8 8M9 .5l-8 8" stroke="#bcbcbc" stroke-width="2"/>`)}</button>
          </div>
        </div>
      </header>
      <main>
        <tool-strip></tool-strip>
        <section class="doc">
          <div class="doc-tabs">
            <div class="doc-tab">
              <span>未标题-1 @ 80 % (CMYK/预览)</span>
              <button aria-label="关闭文档">${closeMark}</button>
            </div>
          </div>
          <div class="stage">
            <div class="canvas">
              <div class="artboard"></div>
              <glyph-panel></glyph-panel>
            </div>
            <div class="rail">
              <button aria-label="向上滚动">${chevronUp()}</button>
              <div class="thumb"></div>
              <button aria-label="向下滚动">${chevronDown("#a0a0a0")}</button>
            </div>
          </div>
          <div class="bottom"><status-bar></status-bar></div>
        </section>
        <layers-panel></layers-panel>
      </main>
    `;
  }
}
